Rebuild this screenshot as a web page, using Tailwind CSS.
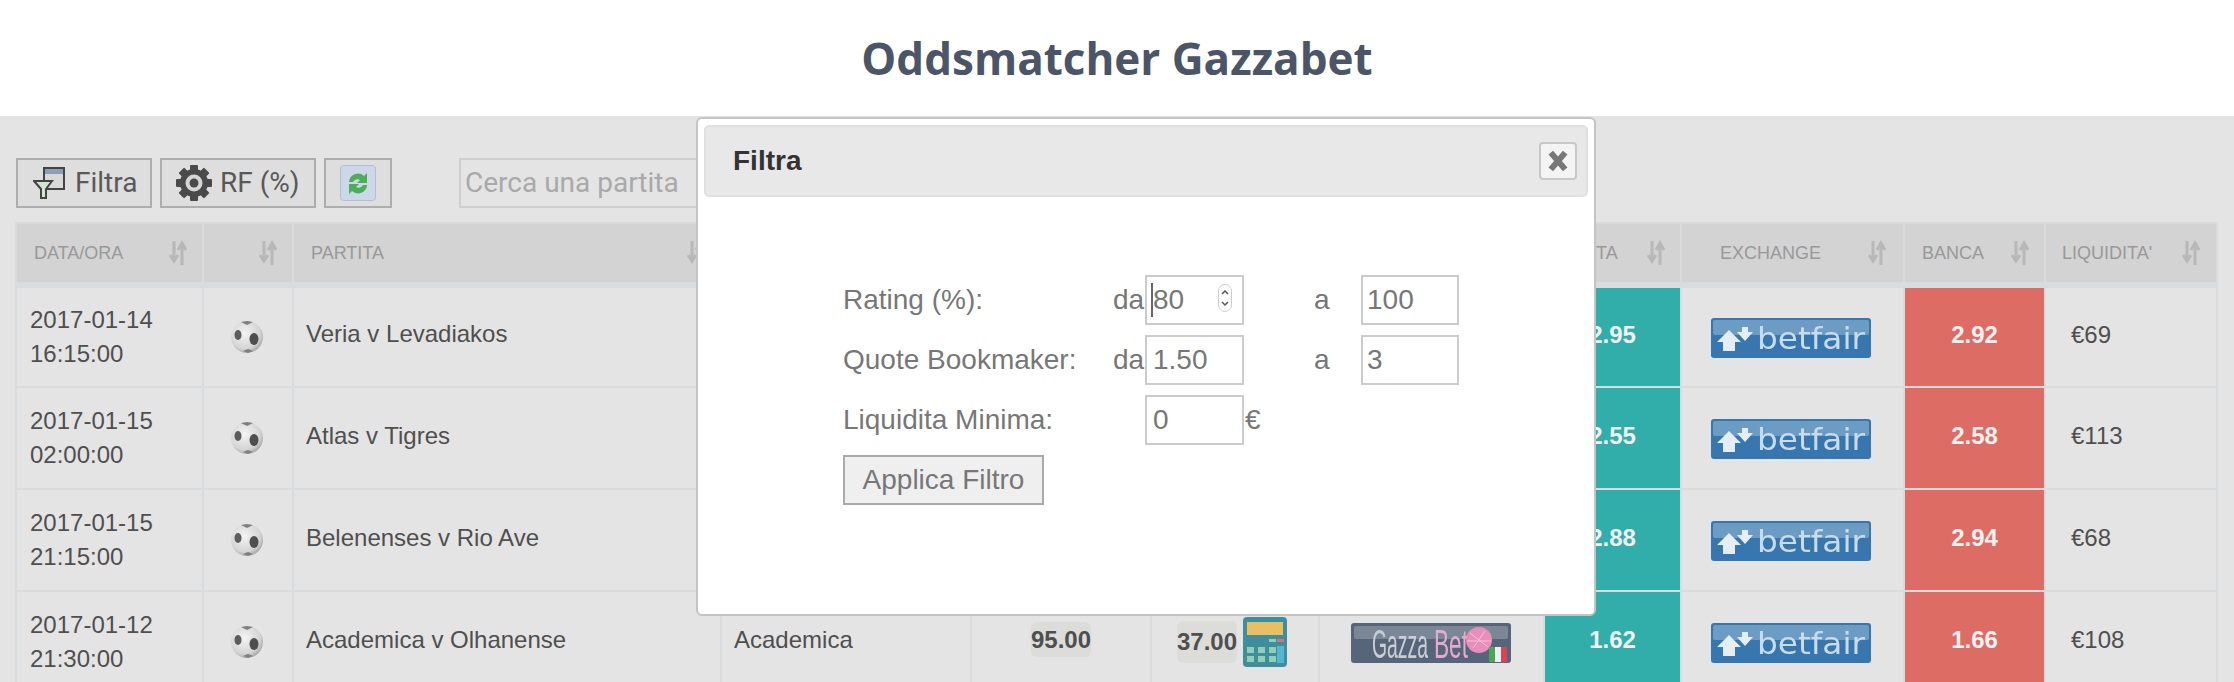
<!DOCTYPE html>
<html lang="en">
  <head>
    <meta charset="UTF-8" />
    <title>Oddsmatcher Gazzabet</title>
    <script src="https://cdn.jsdelivr.net/npm/@tailwindcss/browser@4"></script>
  </head>
  <body class="bg-white">
    <svg class="absolute h-0 w-0">
      <defs>
        <radialGradient id="ball-bg" cx="42%" cy="38%" r="70%">
          <stop offset="0" stop-color="#f4f4f4" />
          <stop offset="0.7" stop-color="#d4d4d4" />
          <stop offset="1" stop-color="#949494" />
        </radialGradient>
      </defs>
      <symbol id="sort" viewBox="0 0 18 26">
        <path d="M5 1v18M1 15l4 6 4-6" fill="none" stroke="#b8b8b8" stroke-width="3" />
        <path d="M13 25V6M9 10l4-7 4 7" fill="none" stroke="#b8b8b8" stroke-width="3" />
      </symbol>
      <symbol id="ball" viewBox="0 0 32 32">
        <circle cx="16" cy="16" r="16" fill="url(#ball-bg)" />
        <ellipse cx="7" cy="14" rx="3.5" ry="5" fill="#5c5c5c" />
        <ellipse cx="23" cy="18" rx="4.5" ry="6" fill="#4f4f4f" />
        <path d="M10 1l6 3 6-3-6-1zM12 30l5 2 5-2-5-2z" fill="#808080" />
      </symbol>
      <symbol id="betfair" viewBox="0 0 160 40">
        <rect width="160" height="40" rx="3" fill="#3776ae" />
        <rect x="2" y="2" width="156" height="15" rx="2" fill="#6c9cc4" />
        <path d="M6 24l12-12 12 12h-6v9H12v-9z" fill="#e6eef5" />
        <path d="M26 14h5V9h6v5h5l-8 9z" fill="#e6eef5" />
        <text x="46" y="31" textLength="108" lengthAdjust="spacingAndGlyphs" font-family="DejaVu Sans, sans-serif" font-size="31" fill="#c9dcec">betfair</text>
      </symbol>
    </svg>

    <div class="relative h-[682px] w-[2234px] overflow-hidden">
      <header class="flex h-[116px] items-center justify-center">
        <h1 class="font-['Open_Sans',sans-serif] text-[44px] font-bold text-[#4b5567]">Oddsmatcher Gazzabet</h1>
      </header>

      <main class="h-[566px] bg-[#e4e4e4] pl-[15px] pt-[42px]">
        <!-- Toolbar -->
        <div class="mb-[15px] flex h-[49px] items-center font-['Roboto',sans-serif] text-[28px] text-[#595959]">
          <button class="ml-px flex h-[50px] w-[136px] items-center gap-[10px] border-2 border-[#aeaeae] bg-[#dedede] pl-[15px]">
            <svg class="h-8 w-8" viewBox="0 0 32 32">
              <rect x="11" y="1" width="20" height="21" fill="#d8d8d8" stroke="#444" stroke-width="2" />
              <rect x="12" y="2" width="18" height="5" fill="#8d9fb8" />
              <path d="M1 14h18l-6 8v9h-5v-9z" fill="#cfe8d2" stroke="#444" stroke-width="2" />
            </svg>
            <span>Filtra</span>
          </button>
          <button class="ml-2 flex h-[50px] w-[156px] items-center gap-2 border-2 border-[#aeaeae] bg-[#dedede] pl-[14px]">
            <svg class="h-9 w-9" viewBox="0 0 36 36">
              <g fill="#4a4a4a">
                <rect x="14" y="0" width="8" height="36" rx="1" />
                <rect x="14" y="0" width="8" height="36" rx="1" transform="rotate(45 18 18)" />
                <rect x="14" y="0" width="8" height="36" rx="1" transform="rotate(90 18 18)" />
                <rect x="14" y="0" width="8" height="36" rx="1" transform="rotate(135 18 18)" />
              </g>
              <circle cx="18" cy="18" r="14" fill="#4a4a4a" />
              <circle cx="18" cy="18" r="8.5" fill="#d6d6d6" />
              <circle cx="18" cy="18" r="4.5" fill="#4a4a4a" />
            </svg>
            <span>RF (%)</span>
          </button>
          <button class="ml-2 flex h-[50px] w-[68px] items-center justify-center border-2 border-[#aeaeae] bg-[#dedede]">
            <svg class="h-9 w-9" viewBox="0 0 36 36">
              <rect x="0.5" y="0.5" width="35" height="35" rx="3" fill="#ccd8e7" stroke="#aebfd6" />
              <path d="M9 17a9 9 0 0 1 15-6l3-3v10h-10l3-3a5 5 0 0 0-7 2z" fill="#4cae57" />
              <path d="M27 20a9 9 0 0 1-15 6l-3 3V19h10l-3 3a5 5 0 0 0 7-2z" fill="#4cae57" />
            </svg>
          </button>
          <input
            type="text"
            placeholder="Cerca una partita"
            class="ml-[67px] h-[50px] w-[340px] border-2 border-[#cfcfcf] bg-[#e4e4e4] pl-[4px] text-[28px] outline-none placeholder:text-[#a9a9a9]"
          />
        </div>

        <!-- Odds table -->
        <table class="w-[2201px] table-fixed font-['Liberation_Sans',sans-serif] text-[24px] leading-[34px] text-[#4f4f4f]">
          <colgroup>
            <col class="w-[187px]" /><col class="w-[90px]" /><col class="w-[428px]" /><col class="w-[250px]" /><col class="w-[180px]" /><col class="w-[168px]" /><col class="w-[225px]" /><col class="w-[137px]" /><col class="w-[223px]" /><col class="w-[141px]" /><col class="w-[172px]" />
          </colgroup>
          <thead class="text-[18px] font-normal text-[#999999]">
            <tr class="h-[62px] bg-[#d3d3d3]">
              <th class="relative border-2 border-b-[6px] border-[#d8dcdf] pl-[17px] text-left font-normal">DATA/ORA<svg class="absolute right-[15px] top-[16px] h-[26px] w-[18px]"><use href="#sort" /></svg></th>
              <th class="relative border-2 border-b-[6px] border-[#d8dcdf]"><svg class="absolute right-[15px] top-[16px] h-[26px] w-[18px]"><use href="#sort" /></svg></th>
              <th class="relative border-2 border-b-[6px] border-[#d8dcdf] pl-[17px] text-left font-normal">PARTITA<svg class="absolute right-[15px] top-[16px] h-[26px] w-[18px]"><use href="#sort" /></svg></th>
              <th class="border-2 border-b-[6px] border-[#d8dcdf]"></th>
              <th class="border-2 border-b-[6px] border-[#d8dcdf]"></th>
              <th class="border-2 border-b-[6px] border-[#d8dcdf]"></th>
              <th class="border-2 border-b-[6px] border-[#d8dcdf]"></th>
              <th class="relative border-2 border-b-[6px] border-[#d8dcdf] pl-[8px] text-left font-normal">USCITA<svg class="absolute right-[15px] top-[16px] h-[26px] w-[18px]"><use href="#sort" /></svg></th>
              <th class="relative border-2 border-b-[6px] border-[#d8dcdf] pl-[38px] text-left font-normal">EXCHANGE<svg class="absolute right-[17px] top-[16px] h-[26px] w-[18px]"><use href="#sort" /></svg></th>
              <th class="relative border-2 border-b-[6px] border-[#d8dcdf] pl-[17px] text-left font-normal">BANCA<svg class="absolute right-[15px] top-[16px] h-[26px] w-[18px]"><use href="#sort" /></svg></th>
              <th class="relative border-2 border-b-[6px] border-[#d8dcdf] pl-[16px] text-left font-normal">LIQUIDITA'<svg class="absolute right-[16px] top-[16px] h-[26px] w-[18px]"><use href="#sort" /></svg></th>
            </tr>
          </thead>
          <tbody>
            <tr class="h-[102px]">
              <td class="border-2 border-[#d8dcdf] pl-[13px]">2017-01-14<br />16:15:00</td>
              <td class="border-2 border-[#d8dcdf] pl-[27px]"><svg class="h-8 w-8"><use href="#ball" /></svg></td>
              <td class="border-2 border-[#d8dcdf] pb-[6px] pl-[12px]">Veria v Levadiakos</td>
              <td class="border-2 border-[#d8dcdf]"></td>
              <td class="border-2 border-[#d8dcdf]"></td>
              <td class="border-2 border-[#d8dcdf]"></td>
              <td class="border-2 border-[#d8dcdf]"></td>
              <td class="border-2 border-[#d8dcdf] bg-[#31adaa] pb-[4px] text-center font-bold text-[#f1f1f1]">2.95</td>
              <td class="border-2 border-[#d8dcdf]"><svg class="ml-[29px] mt-[2px] h-10 w-40 blur-[0.4px]"><use href="#betfair" /></svg></td>
              <td class="border-2 border-[#d8dcdf] bg-[#dd6d64] pb-[4px] text-center font-bold text-[#f1f1f1]">2.92</td>
              <td class="border-2 border-[#d8dcdf] pb-[4px] pl-[25px]">€69</td>
            </tr>
            <tr class="h-[102px]">
              <td class="border-2 border-[#d8dcdf] pl-[13px]">2017-01-15<br />02:00:00</td>
              <td class="border-2 border-[#d8dcdf] pl-[27px]"><svg class="h-8 w-8"><use href="#ball" /></svg></td>
              <td class="border-2 border-[#d8dcdf] pb-[4px] pl-[12px]">Atlas v Tigres</td>
              <td class="border-2 border-[#d8dcdf]"></td>
              <td class="border-2 border-[#d8dcdf]"></td>
              <td class="border-2 border-[#d8dcdf]"></td>
              <td class="border-2 border-[#d8dcdf]"></td>
              <td class="border-2 border-[#d8dcdf] bg-[#31adaa] pb-[4px] text-center font-bold text-[#f1f1f1]">2.55</td>
              <td class="border-2 border-[#d8dcdf]"><svg class="ml-[29px] mt-[2px] h-10 w-40 blur-[0.4px]"><use href="#betfair" /></svg></td>
              <td class="border-2 border-[#d8dcdf] bg-[#dd6d64] pb-[4px] text-center font-bold text-[#f1f1f1]">2.58</td>
              <td class="border-2 border-[#d8dcdf] pb-[4px] pl-[25px]">€113</td>
            </tr>
            <tr class="h-[102px]">
              <td class="border-2 border-[#d8dcdf] pl-[13px]">2017-01-15<br />21:15:00</td>
              <td class="border-2 border-[#d8dcdf] pl-[27px]"><svg class="h-8 w-8"><use href="#ball" /></svg></td>
              <td class="border-2 border-[#d8dcdf] pb-[4px] pl-[12px]">Belenenses v Rio Ave</td>
              <td class="border-2 border-[#d8dcdf]"></td>
              <td class="border-2 border-[#d8dcdf]"></td>
              <td class="border-2 border-[#d8dcdf]"></td>
              <td class="border-2 border-[#d8dcdf]"></td>
              <td class="border-2 border-[#d8dcdf] bg-[#31adaa] pb-[4px] text-center font-bold text-[#f1f1f1]">2.88</td>
              <td class="border-2 border-[#d8dcdf]"><svg class="ml-[29px] mt-[2px] h-10 w-40 blur-[0.4px]"><use href="#betfair" /></svg></td>
              <td class="border-2 border-[#d8dcdf] bg-[#dd6d64] pb-[4px] text-center font-bold text-[#f1f1f1]">2.94</td>
              <td class="border-2 border-[#d8dcdf] pb-[4px] pl-[25px]">€68</td>
            </tr>
            <tr class="h-[102px]">
              <td class="border-2 border-[#d8dcdf] pl-[13px]">2017-01-12<br />21:30:00</td>
              <td class="border-2 border-[#d8dcdf] pl-[27px]"><svg class="h-8 w-8"><use href="#ball" /></svg></td>
              <td class="border-2 border-[#d8dcdf] pb-[4px] pl-[12px]">Academica v Olhanense</td>
              <td class="border-2 border-[#d8dcdf] pb-[4px] pl-[12px]">Academica</td>
              <td class="border-2 border-[#d8dcdf] pb-[4px] text-center font-bold"><span class="rounded-[6px] bg-[#dcdcd8] py-[4px]">95.00</span></td>
              <td class="border-2 border-[#d8dcdf] pl-[25px]">
                <div class="flex items-center gap-[6px] font-bold">
                  <span class="rounded-[6px] bg-[#dcdcd8] py-[4px]">37.00</span>
                  <svg class="h-[50px] w-[44px] shrink-0 blur-[0.4px]" viewBox="0 0 44 50">
                    <rect width="44" height="50" rx="4" fill="#3f8e9c" />
                    <rect x="4" y="5" width="36" height="13" fill="#e8c063" />
                    <path d="M26 22h7v3h-7z" fill="#8fcfb5" />
                    <rect x="34" y="22" width="7" height="3" fill="#d9708a" />
                    <rect x="4" y="30" width="7" height="6" fill="#8fcfb5" /><rect x="15" y="30" width="7" height="6" fill="#8fcfb5" /><rect x="26" y="30" width="7" height="6" fill="#8fcfb5" />
                    <rect x="4" y="39" width="7" height="6" fill="#8fcfb5" /><rect x="15" y="39" width="7" height="6" fill="#8fcfb5" /><rect x="26" y="39" width="7" height="6" fill="#8fcfb5" />
                    <rect x="34" y="29" width="7" height="17" fill="#56b5d0" />
                  </svg>
                </div>
              </td>
              <td class="border-2 border-[#d8dcdf] pl-[31px]">
                <svg class="mt-[2px] h-10 w-40 blur-[0.4px]" viewBox="0 0 160 40">
                  <rect width="160" height="40" rx="3" fill="#56657a" />
                  <rect x="3" y="3" width="154" height="13" rx="2" fill="#7a8797" />
                  <text x="21" y="35" textLength="56" lengthAdjust="spacingAndGlyphs" font-family="Liberation Sans, sans-serif" font-size="40" fill="#c9ced4">Gazza</text>
                  <text x="83" y="35" textLength="34" lengthAdjust="spacingAndGlyphs" font-family="Liberation Sans, sans-serif" font-size="40" fill="#e6a9cf">Bet</text>
                  <circle cx="128" cy="17" r="13" fill="#e88fb9" />
                  <path d="M119 10l18 14M122 25l12-17M116 18h24" stroke="#f4c1da" fill="none" />
                  <rect x="138" y="24" width="6" height="15" fill="#4ba45a" /><rect x="144" y="24" width="6" height="15" fill="#eeeeee" /><rect x="150" y="24" width="6" height="15" fill="#d8454f" />
                </svg>
              </td>
              <td class="border-2 border-[#d8dcdf] bg-[#31adaa] pb-[4px] text-center font-bold text-[#f1f1f1]">1.62</td>
              <td class="border-2 border-[#d8dcdf]"><svg class="ml-[29px] mt-[2px] h-10 w-40 blur-[0.4px]"><use href="#betfair" /></svg></td>
              <td class="border-2 border-[#d8dcdf] bg-[#dd6d64] pb-[4px] text-center font-bold text-[#f1f1f1]">1.66</td>
              <td class="border-2 border-[#d8dcdf] pb-[4px] pl-[25px]">€108</td>
            </tr>
          </tbody>
        </table>
      </main>

      <!-- Filtra modal -->
      <div class="absolute left-[696px] top-[117px] h-[499px] w-[900px] rounded-[6px] border-2 border-[#c4c4c4] bg-white p-[6px] font-['Liberation_Sans',sans-serif] text-[#777777]">
        <div class="flex h-[72px] items-center justify-between rounded-[5px] border-2 border-[#e0e0e0] bg-[#e8e8e8] pl-[27px] pr-[9px]">
          <h2 class="text-[28px] font-bold text-[#333333]">Filtra</h2>
          <button class="flex h-[38px] w-[38px] items-center justify-center rounded-[4px] border-2 border-[#c8c8c8] bg-[#f4f4f4]">
            <svg class="h-6 w-6" viewBox="0 0 20 20"><path d="M4 3l12 14M16 3L4 17" stroke="#777777" stroke-width="5" /></svg>
          </button>
        </div>
        <div class="flex flex-col gap-[10px] pl-[139px] pt-[78px] text-[28px]">
          <div class="flex h-[50px] items-center">
            <span class="w-[270px]">Rating (%):</span>
            <span class="w-[32px]">da</span>
            <div class="relative">
              <input type="text" value="80" class="h-[50px] w-[99px] border-2 border-[#cccccc] pl-[6px] text-[#777777] outline-none" />
              <span class="absolute left-[6px] top-[8px] h-[34px] w-[2px] bg-[#666666]"></span>
              <svg class="absolute left-[73px] top-[9px] h-[28px] w-[14px]" viewBox="0 0 14 28">
                <rect x="0.5" y="0.5" width="13" height="27" rx="6.5" fill="#ffffff" stroke="#cccccc" />
                <path d="M4 10l3-3 3 3M4 18l3 3 3-3" fill="none" stroke="#555555" stroke-width="1.5" />
              </svg>
            </div>
            <span class="ml-[70px] w-[47px]">a</span>
            <input type="text" value="100" class="h-[50px] w-[98px] border-2 border-[#cccccc] pl-[4px] text-[#777777] outline-none" />
          </div>
          <div class="flex h-[50px] items-center">
            <span class="w-[270px]">Quote Bookmaker:</span>
            <span class="w-[32px]">da</span>
            <input type="text" value="1.50" class="h-[50px] w-[99px] border-2 border-[#cccccc] pl-[6px] text-[#777777] outline-none" />
            <span class="ml-[70px] w-[47px]">a</span>
            <input type="text" value="3" class="h-[50px] w-[98px] border-2 border-[#cccccc] pl-[4px] text-[#777777] outline-none" />
          </div>
          <div class="flex h-[50px] items-center">
            <span class="w-[302px]">Liquidita Minima:</span>
            <input type="text" value="0" class="h-[50px] w-[99px] border-2 border-[#cccccc] pl-[6px] text-[#777777] outline-none" />
            <span class="ml-[1px]">€</span>
          </div>
          <button class="h-[50px] w-[201px] border-2 border-[#aaaaaa] bg-[#efefef] text-center">Applica Filtro</button>
        </div>
      </div>
    </div>
  </body>
</html>
